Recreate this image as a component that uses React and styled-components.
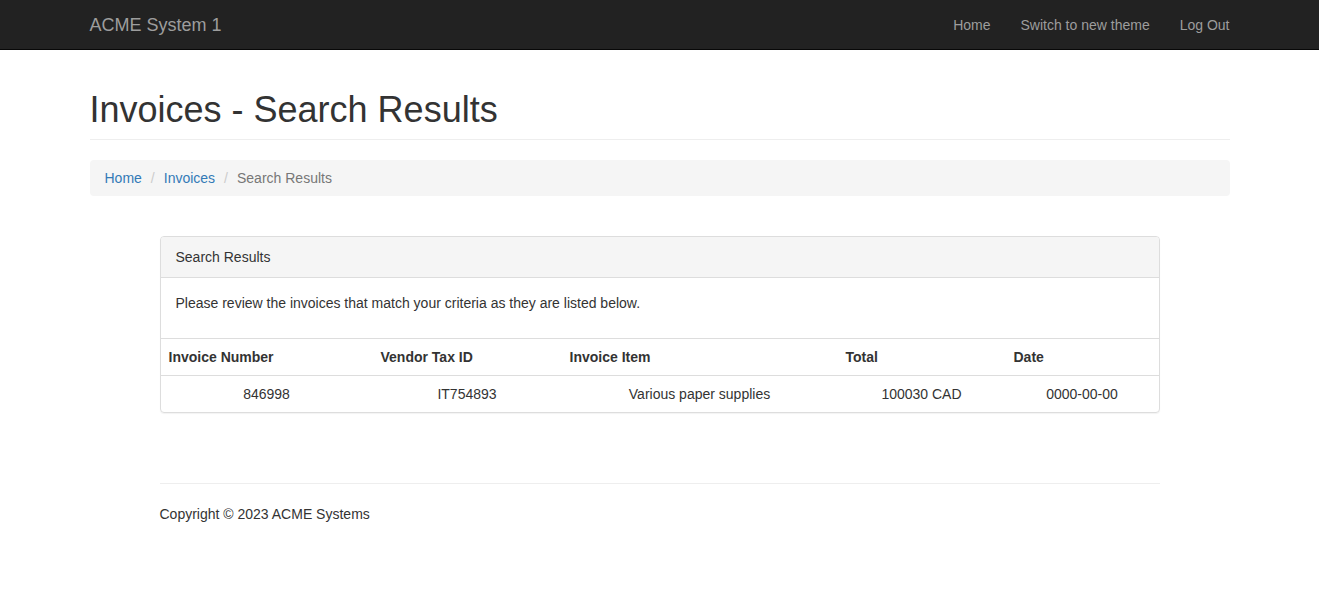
import React from 'react';
import styled, { createGlobalStyle } from 'styled-components';

const GlobalStyle = createGlobalStyle`
  * { box-sizing: border-box; }
  body {
    margin: 0;
    font-family: "Liberation Sans", Arial, Helvetica, sans-serif;
    font-size: 14px;
    line-height: 1.42857143;
    color: #333;
    background: #fff;
  }
`;

const Navbar = styled.nav`
  background: #222;
  border-bottom: 1px solid #080808;
  height: 50px;
`;

const Container = styled.div`
  width: 1170px;
  margin: 0 auto;
  padding: 0 15px;
`;

const NavInner = styled(Container)`
  display: flex;
  justify-content: space-between;
  align-items: flex-start;
`;

const Brand = styled.a`
  margin-left: -15px;
  padding: 15px;
  font-size: 18px;
  line-height: 20px;
  color: #9d9d9d;
  text-decoration: none;
`;

const NavList = styled.ul`
  display: flex;
  list-style: none;
  margin: 0 -15px 0 0;
  padding: 0;
`;

const NavLink = styled.a`
  display: block;
  padding: 15px;
  line-height: 20px;
  color: #9d9d9d;
  text-decoration: none;
`;

const PageHeader = styled.div`
  margin: 40px 0 20px;
  padding-bottom: 9px;
  border-bottom: 1px solid #eee;
`;

const Title = styled.h1`
  margin: 0;
  font-size: 36px;
  font-weight: 500;
  line-height: 1.1;
`;

const Breadcrumb = styled.ol`
  display: flex;
  align-items: center;
  list-style: none;
  margin: 0 0 20px;
  padding: 8px 15px;
  background: #f5f5f5;
  border-radius: 4px;
`;

const Crumb = styled.li`
  color: ${p => (p.$active ? '#777' : '#337ab7')};
`;

const Separator = styled.li`
  padding: 0 9px 0 9px;
  color: #ccc;
`;

const CrumbLink = styled.a`
  color: #337ab7;
  text-decoration: none;
`;

const Narrow = styled.div`
  width: 1000px;
  margin: 40px auto 0;
`;

const Panel = styled.div`
  border: 1px solid #ddd;
  border-radius: 4px;
  box-shadow: 0 1px 1px rgba(0, 0, 0, 0.05);
  margin-bottom: 20px;
  overflow: hidden;
`;

const PanelHeading = styled.div`
  padding: 10px 15px;
  background: #f5f5f5;
  border-bottom: 1px solid #ddd;
`;

const PanelBody = styled.div`
  padding: 15px;
  p { margin: 0 0 10px; }
`;

const Table = styled.table`
  width: 100%;
  border-collapse: collapse;
  border-top: 1px solid #ddd;
`;

const Th = styled.th`
  width: ${p => p.$w}px;
  padding: 8px;
  text-align: left;
  font-weight: bold;
  line-height: 20px;
  border-bottom: 1px solid #ddd;
`;

const Td = styled.td`
  padding: 8px;
  text-align: center;
  line-height: 20px;
`;

const Footer = styled.footer`
  margin-top: 70px;
  border-top: 1px solid #eee;
  padding-top: 20px;
  p { margin: 0 0 10px; }
`;

const columns = [
  { label: 'Invoice Number', w: 212 },
  { label: 'Vendor Tax ID', w: 189 },
  { label: 'Invoice Item', w: 276 },
  { label: 'Total', w: 168 },
  { label: 'Date', w: 153 },
];

const rows = [['846998', 'IT754893', 'Various paper supplies', '100030 CAD', '0000-00-00']];

export default function App() {
  return (
    <>
      <GlobalStyle />
      <Navbar>
        <NavInner>
          <Brand href="#">ACME System 1</Brand>
          <NavList>
            <li><NavLink href="#">Home</NavLink></li>
            <li><NavLink href="#">Switch to new theme</NavLink></li>
            <li><NavLink href="#">Log Out</NavLink></li>
          </NavList>
        </NavInner>
      </Navbar>
      <Container>
        <PageHeader>
          <Title>Invoices - Search Results</Title>
        </PageHeader>
        <Breadcrumb>
          <Crumb><CrumbLink href="#">Home</CrumbLink></Crumb>
          <Separator aria-hidden="true">/</Separator>
          <Crumb><CrumbLink href="#">Invoices</CrumbLink></Crumb>
          <Separator aria-hidden="true">/</Separator>
          <Crumb $active>Search Results</Crumb>
        </Breadcrumb>
      </Container>
      <Narrow>
        <Panel>
          <PanelHeading>Search Results</PanelHeading>
          <PanelBody>
            <p>Please review the invoices that match your criteria as they are listed below.</p>
          </PanelBody>
          <Table>
            <thead>
              <tr>
                {columns.map(c => <Th key={c.label} $w={c.w}>{c.label}</Th>)}
              </tr>
            </thead>
            <tbody>
              {rows.map((r, i) => (
                <tr key={i}>
                  {r.map((cell, j) => <Td key={j}>{cell}</Td>)}
                </tr>
              ))}
            </tbody>
          </Table>
        </Panel>
        <Footer>
          <p>Copyright © 2023 ACME Systems</p>
        </Footer>
      </Narrow>
    </>
  );
}
